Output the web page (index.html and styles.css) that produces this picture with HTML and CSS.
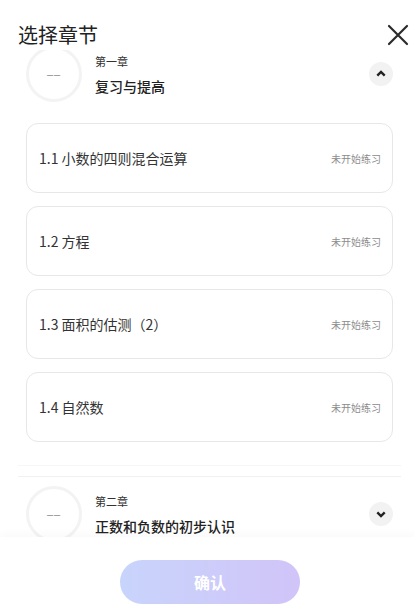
FILE: index.html
```html
<!DOCTYPE html>
<html lang="zh-CN">

<head>
    <meta charset="UTF-8">
    <meta name="viewport" content="width=device-width, initial-scale=1.0">
    <title>选择章节</title>
    <link rel="stylesheet" href="styles.css">
</head>

<body>
    <div class="sheet">
        <div class="sheetHead">
            <h1 class="sheetTitle">选择章节</h1>
            <span class="closeBtn">
                <svg width="22" height="22" viewBox="0 0 22 22">
                    <path d="M2 2 L20 20 M20 2 L2 20" stroke="#2b2b2b" stroke-width="2.2" stroke-linecap="round" fill="none" />
                </svg>
            </span>
        </div>

        <div class="chapterList">
            <div class="listInner">
                <!-- 第一章 展开 -->
                <div class="chapter open">
                    <div class="chapterHead">
                        <div class="ring"><span>––</span></div>
                        <div class="chapterInfo">
                            <p class="chapterNo">第一章</p>
                            <p class="chapterName">复习与提高</p>
                        </div>
                        <span class="toggle">
                            <svg width="24" height="24" viewBox="0 0 24 24">
                                <path d="M8.3 13.6 L12 10 L15.7 13.6" stroke="#222" stroke-width="2.4" fill="none" />
                            </svg>
                        </span>
                    </div>
                    <ul class="sections">
                        <li class="section"><span class="secName">1.1 小数的四则混合运算</span><span class="secState">未开始练习</span></li>
                        <li class="section"><span class="secName">1.2 方程</span><span class="secState">未开始练习</span></li>
                        <li class="section"><span class="secName">1.3 面积的估测（2）</span><span class="secState">未开始练习</span></li>
                        <li class="section"><span class="secName">1.4 自然数</span><span class="secState">未开始练习</span></li>
                    </ul>
                </div>

                <!-- 第二章 收起 -->
                <div class="chapter">
                    <div class="chapterHead">
                        <div class="ring"><span>––</span></div>
                        <div class="chapterInfo">
                            <p class="chapterNo">第二章</p>
                            <p class="chapterName">正数和负数的初步认识</p>
                        </div>
                        <span class="toggle">
                            <svg width="24" height="24" viewBox="0 0 24 24">
                                <path d="M8.3 10.4 L12 14 L15.7 10.4" stroke="#222" stroke-width="2.4" fill="none" />
                            </svg>
                        </span>
                    </div>
                </div>
            </div>
        </div>

        <div class="sheetFoot">
            <button class="okBtn">确认</button>
        </div>
    </div>
</body>

</html>
```

FILE: styles.css
```css
* {
    padding: 0;
    margin: 0;
    list-style: none;
    box-sizing: border-box;
}

body {
    font-family: "Noto Sans CJK SC", "Noto Sans", sans-serif;
    background: #fff;
    color: #333;
}

.sheet {
    width: 415px;
    height: 615px;
    display: flex;
    flex-direction: column;
}

.sheetHead {
    height: 50px;
    display: flex;
    justify-content: space-between;
    align-items: flex-start;
    padding: 22px 6px 0 18px;
}

.sheetTitle {
    font-size: 20px;
    font-weight: normal;
    line-height: 26px;
    color: #222;
}

.closeBtn {
    display: block;
    width: 22px;
    height: 22px;
    margin-top: 2px;
}

.closeBtn svg {
    display: block;
}

/* 列表区域，已经往下滚了一点 */
.chapterList {
    height: 487px;
    overflow: hidden;
}

.listInner {
    margin-top: -4px;
}

.chapter {
    padding: 0 22px 0 26px;
}

.chapter.open {
    padding-bottom: 23px;
    border-bottom: 1px solid #f6f6f6;
    margin: 0 14px 0 18px;
    padding-left: 8px;
    padding-right: 8px;
}

.chapter.open + .chapter {
    margin: 10px 14px 0 18px;
    padding: 9px 8px 0 8px;
    border-top: 1px solid #f1f1f1;
}

.chapterHead {
    display: flex;
    align-items: center;
    height: 56px;
}

.ring {
    width: 56px;
    height: 56px;
    border-radius: 50%;
    border: 3px solid #f3f3f3;
    display: flex;
    align-items: center;
    justify-content: center;
    flex-shrink: 0;
}

.ring span {
    font-size: 11px;
    line-height: 12px;
    color: #8a8a8a;
    letter-spacing: 1px;
    font-family: "Liberation Sans", sans-serif;
}

.chapterInfo {
    flex: 1;
    padding-left: 13px;
    padding-top: 1px;
}

.chapterNo {
    font-size: 11px;
    line-height: 16px;
    color: #333;
}

.chapterName {
    font-size: 14px;
    font-weight: 500;
    line-height: 20px;
    margin-top: 7px;
    color: #222;
}

.toggle {
    width: 24px;
    height: 24px;
    border-radius: 50%;
    background: #f2f2f2;
    flex-shrink: 0;
}

.toggle svg {
    display: block;
}

.sections {
    margin-top: 21px;
    display: flex;
    flex-direction: column;
    gap: 13px;
}

.section {
    height: 70px;
    border: 1px solid #e7e7e7;
    border-radius: 12px;
    display: flex;
    align-items: center;
    justify-content: space-between;
    padding: 0 11px 0 12px;
}

.secName {
    font-size: 14px;
    color: #333;
}

.secState {
    font-size: 10px;
    color: #8c8c8c;
}

.sheetFoot {
    flex: 1;
    background: #fff;
    box-shadow: 0 -4px 8px rgba(0, 0, 0, 0.025);
    position: relative;
    display: flex;
    justify-content: center;
    padding: 23px 0 0 5px;
}

.okBtn {
    width: 180px;
    height: 44px;
    border: none;
    border-radius: 22px;
    background: linear-gradient(90deg, #c8d4fb, #d1c4f8);
    color: #fff;
    font-size: 16px;
    font-weight: bold;
    font-family: "Noto Sans CJK SC", sans-serif;
}
```
